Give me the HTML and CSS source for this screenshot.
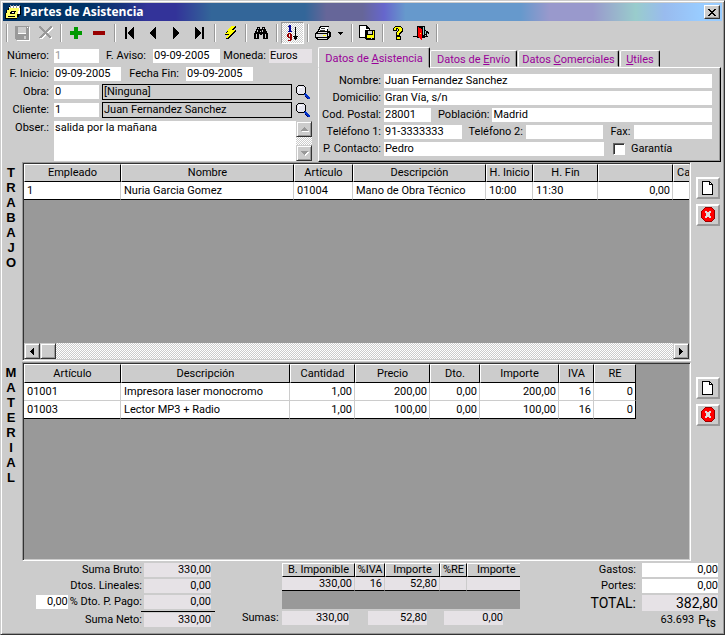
FILE: index.html
```
<!DOCTYPE html>
<html lang="es">
    <head>
        <meta charset="utf-8">
        <title>Partes de Asistencia</title>
        <link rel="stylesheet" href="styles.css">
    </head>
    <body>
        <div class="window">
            <!-- Title bar -->
            <div class="titlebar">
                <svg class="icon" viewBox="0 0 16 16">
                    <path d="M4 2h12v9h-2v2h-2v2H0V9h1V6h2V4h1z" fill="#000"/>
                    <path d="M5 2h10v8h-2V4H4z" fill="#fff"/>
                    <path d="M4 4h10v3h-1v3h-1v4H1V9h1V6h2z" fill="#ffff66"/>
                    <path d="M5 1h1v3H5zM8 1h1v3H8zM11 1h1v3h-1zM14 1h1v3h-1z" fill="#999"/>
                    <path d="M6 7h5v1h-1v2H5V8h1zM3 12h7v1H3z" fill="#000"/>
                    <path d="M7 8h2v1H7z" fill="#fff"/>
                </svg>
                <h1>Partes de Asistencia</h1>
                <button class="close" aria-label="Cerrar">
                    <svg viewBox="0 0 8 7"><path d="M0 0h2v1h1v1h2V1h1V0h2v1H7v1H6v1H5v1h1v1h1v1h1v1H6V6H5V5H3v1H2v1H0V6h1V5h1V4h1V3H2V2H1V1H0z"/></svg>
                </button>
            </div>

            <!-- Toolbar -->
            <div class="toolbar">
                <span class="sep"></span>
                <button aria-label="Guardar"><svg class="icon" viewBox="0 0 16 16">
                    <path d="M2 2h14v14H3v-1H2z" fill="#fff"/><path d="M1 1h14v14H2v-1H1z" fill="#999"/><path d="M4 2h8v6H4zM10 11h2v3h-2z" fill="#ccc"/><path d="M13 2h1v1h-1zM4 8h8v1H4z" fill="#fff"/>
                </svg></button>
                <button aria-label="Cancelar"><svg class="icon" viewBox="0 0 16 16">
                    <path d="M3 2l2 0 10 11 0 1-2 0L3 4zM15 2h1v1L5 14H3v-1z" fill="#fff"/><path d="M2 1h2l10 11v1h-2L2 3zM14 1h1v1L4 13H2v-1z" fill="#999"/>
                </svg></button>
                <span class="sep"></span>
                <button aria-label="Añadir"><svg class="icon" viewBox="0 0 16 16"><path d="M6 2h4v4h4v4h-4v4H6v-4H2V6h4z" fill="#090"/></svg></button>
                <button aria-label="Quitar"><svg class="icon" viewBox="0 0 16 16"><path d="M2 6h12v4H2z" fill="#900"/></svg></button>
                <span class="sep"></span>
                <button aria-label="Primero"><svg class="icon" viewBox="0 0 16 16"><path d="M3 2h2v12H3zM12 2v12h-1v-1h-1v-1H9v-1H8v-1H7V9H6V7h1V6h1V5h1V4h1V3h1V2z"/></svg></button>
                <button aria-label="Anterior"><svg class="icon" viewBox="0 0 16 16"><path d="M11 2v12h-1v-1H9v-1H8v-1H7v-1H6V9H5V7h1V6h1V5h1V4h1V3h1V2z"/></svg></button>
                <button aria-label="Siguiente"><svg class="icon" viewBox="0 0 16 16"><path d="M5 2v12h1v-1h1v-1h1v-1h1v-1h1V9h1V7h-1V6H9V5H8V4H7V3H6V2z"/></svg></button>
                <button aria-label="Último"><svg class="icon" viewBox="0 0 16 16"><path d="M11 2h2v12h-2zM4 2v12h1v-1h1v-1h1v-1h1v-1h1V9h1V7H9V6H8V5H7V4H6V3H5V2z"/></svg></button>
                <span class="sep"></span>
                <button aria-label="Ejecutar"><svg class="icon" viewBox="0 0 16 16">
                    <path d="M9 1h5v2h-1v1h-1v1h2v2h-1v1h-1v1h-1v1h-1v1H9v1H8v1H7v1H4v-2h1v-1h1v-1H3V8h1V7h1V5h1V4h1V3h1V2h1z"/>
                    <path d="M9 1h4v1h-1v1h-1v1h-1v1h3v1h-1v1h-1v1h-1v1H9v1H8v1H7v1H6v1H4v-1h1v-1h1v-1h1V9H3V8h2V7h1V6H5V5h1V4h1V3h1V2h1z" fill="#ff0"/>
                </svg></button>
                <span class="sep"></span>
                <button aria-label="Buscar"><svg class="icon" viewBox="0 0 16 16">
                    <path d="M4 2h3v2h2V2h3v2h1v2h1v2h1v6h-5V9H9v1H7V9H6v5H1V8h1V6h1V4h1z"/><path d="M5 3h1v1H5zM10 3h1v1h-1zM4 5h1v2H4zM9 5h1v2H9zM3 9h1v4H3zM12 9h1v4h-1zM7 6h1v1H7z" fill="#ccc"/>
                </svg></button>
                <span class="sep"></span>
                <button class="pressed" aria-label="Ordenar"><svg class="icon" viewBox="0 0 16 16">
                    <path d="M5 0h2v6h1v1H4V6h1V2H4V1h1z" fill="#009"/>
                    <path d="M4 8h3v1h1v6H7v1H4v-1h2v-2H4v-1H3V9h1zM5 9v3h1V9z" fill="#900"/>
                    <path d="M11 2h1v9h2v1h-1v2h-1v1h-1v-1h-1v-2H9v-1h2z"/>
                </svg></button>
                <span class="sep"></span>
                <button aria-label="Imprimir"><svg class="icon" viewBox="0 0 16 16">
                    <path d="M5 1h9v1h-1v4h2v1h1v5h-1v1h-1v1h-1v1H2v-1H1v-1H0V8h1V7h1V6h1V4h1V2h1z"/>
                    <path d="M6 2h7l-1 4H4z" fill="#fff"/><path d="M3 7h9v1H2zM1 9h11v3H1zM3 13h9v1H3zM13 8h1v3h-1z" fill="#ddd"/><path d="M6 3h4v1H6zM5 5h5v1H5z" fill="#333"/><path d="M8 10h3v1H8z" fill="#ff0"/>
                </svg></button>
                <button class="drop" aria-label="Opciones de impresión"><svg viewBox="0 0 5 3"><path d="M0 0h5v1H4v1H3v1H2V2H1V1H0z"/></svg></button>
                <span class="sep"></span>
                <button aria-label="Guardar como"><svg class="icon" viewBox="0 0 16 16">
                    <path d="M0 0h8v1h1v1h1v1h1v10H0z"/><path d="M1 1h6v3h3v8H1z" fill="#fff"/>
                    <path d="M6 5h10v10H7v-1H6z"/><path d="M7 6h1v7h7V6h-1v4H8V6z" fill="#ff0"/><path d="M9 6h4v3H9zM12 12h1v2h-1z" fill="#ccc"/>
                </svg></button>
                <span class="sep"></span>
                <button aria-label="Ayuda"><svg class="icon" viewBox="0 0 16 16">
                    <path d="M5 1h6v1h1v1h1v4h-1v1h-1v1h-1v2H6V7h1V6h1V4H7v2H3V3h1V2h1zM6 11h5v4H6z"/>
                    <path d="M5 2h6v1h1v3h-1v1h-1v1H9v2H7V7h1V6h1V4H8V3H6v2H4V3h1zM7 12h3v2H7z" fill="#ff0"/>
                </svg></button>
                <button aria-label="Salir"><svg class="icon" viewBox="0 0 16 16">
                    <path d="M4 1h8v12H4z"/><path d="M5 2l4 2v11l-4-3z" fill="#f00"/><path d="M0 11h5v1H0zM11 11h4v1h-4z"/><path d="M10 4h3v2h2v1h1v2h-2v3h-1v-2h-1v2h-2z" fill="#000"/><path d="M10 2h1v8h-1zM12 4h1v1h-1zM12 6h1v3h-1zM14 8h1v1h-1z" fill="#9cc"/><path d="M7 8h1v1H7z" fill="#ff0"/>
                </svg></button>
                <span class="sep"></span>
            </div>

            <!-- Header data -->
            <div class="header">
                <form class="parte">
                    <div class="row">
                        <label class="first" for="numero">Número:</label>
                        <input class="short" id="numero" value="1" disabled>
                        <label class="mid" for="aviso">F. Aviso:</label>
                        <input class="date" id="aviso" value="09-09-2005">
                        <label class="moneda" for="moneda">Moneda:</label>
                        <input class="grow soft" id="moneda" value="Euros" readonly>
                    </div>
                    <div class="row">
                        <label class="first" for="inicio">F. Inicio:</label>
                        <input class="date" id="inicio" value="09-09-2005">
                        <label class="fin" for="fin">Fecha Fin:</label>
                        <input class="date" id="fin" value="09-09-2005">
                    </div>
                    <div class="row">
                        <label class="first" for="obra">Obra:</label>
                        <input class="short" id="obra" value="0">
                        <output class="name">[Ninguna]</output>
                        <button type="button" class="lens" aria-label="Buscar obra"><svg class="icon" viewBox="0 0 16 16">
                            <circle cx="6" cy="6" r="5" fill="#e6e6f0" stroke="#000"/><path d="M4 3h3v1H4zM3 4h1v3H3z" fill="#fff"/><path d="M10 10l5 5" stroke="#0033cc" stroke-width="2"/><path d="M10 12l3 3" stroke="#000066"/>
                        </svg></button>
                    </div>
                    <div class="row">
                        <label class="first" for="cliente">Cliente:</label>
                        <input class="short" id="cliente" value="1">
                        <output class="name">Juan Fernandez Sanchez</output>
                        <button type="button" class="lens" aria-label="Buscar cliente"><svg class="icon" viewBox="0 0 16 16">
                            <circle cx="6" cy="6" r="5" fill="#e6e6f0" stroke="#000"/><path d="M4 3h3v1H4zM3 4h1v3H3z" fill="#fff"/><path d="M10 10l5 5" stroke="#0033cc" stroke-width="2"/><path d="M10 12l3 3" stroke="#000066"/>
                        </svg></button>
                    </div>
                    <div class="row notes">
                        <label class="first" for="obser">Obser.:</label>
                        <textarea id="obser">salida por la mañana</textarea>
                        <div class="vscroll">
                            <button type="button" class="scroll" aria-label="Subir"><svg viewBox="0 0 8 4"><path d="M5 1l4 4H1z" fill="#fff"/><path d="M4 0l4 4H0z" fill="#999"/></svg></button>
                            <button type="button" class="scroll" aria-label="Bajar"><svg viewBox="0 0 8 4"><path d="M5 5l4-4H1z" fill="#fff"/><path d="M4 4l4-4H0z" fill="#999"/></svg></button>
                        </div>
                    </div>
                </form>

                <div class="datos">
                    <div class="tabs">
                        <button class="tab active">Datos de <u>A</u>sistencia</button>
                        <button class="tab envio">Datos de <u>E</u>nvío</button>
                        <button class="tab comerciales">Datos <u>C</u>omerciales</button>
                        <button class="tab utiles"><u>U</u>tiles</button>
                    </div>
                    <form class="panel">
                        <div class="row">
                            <label class="first" for="nombre">Nombre:</label>
                            <input class="grow" id="nombre" value="Juan Fernandez Sanchez">
                        </div>
                        <div class="row">
                            <label class="first" for="domicilio">Domicilio:</label>
                            <input class="grow" id="domicilio" value="Gran Vía, s/n">
                        </div>
                        <div class="row">
                            <label class="first" for="postal">Cod. Postal:</label>
                            <input class="postal" id="postal" value="28001">
                            <label class="second" for="poblacion">Población:</label>
                            <input class="grow" id="poblacion" value="Madrid">
                        </div>
                        <div class="row">
                            <label class="first" for="tel1">Teléfono 1:</label>
                            <input class="grow" id="tel1" value="91-3333333">
                            <label class="second" for="tel2">Teléfono 2:</label>
                            <input class="grow" id="tel2">
                            <label class="fax" for="fax">Fax:</label>
                            <input class="grow" id="fax">
                        </div>
                        <div class="row">
                            <label class="first" for="contacto">P. Contacto:</label>
                            <input class="grow" id="contacto" value="Pedro">
                            <div class="check">
                                <input type="checkbox" id="garantia">
                                <label for="garantia">Garantía</label>
                            </div>
                        </div>
                    </form>
                </div>
            </div>

            <!-- Work grid -->
            <div class="section">
                <div class="side">T<br>R<br>A<br>B<br>A<br>J<br>O</div>
                <div class="grid">
                    <div class="view">
                        <table class="trabajo">
                            <colgroup><col class="w97"><col class="w173"><col class="w59"><col class="w133"><col class="w47"><col class="w65"><col class="w75"><col class="w65"></colgroup>
                            <thead>
                                <tr><th>Empleado</th><th>Nombre</th><th>Artículo</th><th>Descripción</th><th>H. Inicio</th><th>H. Fin</th><th></th><th class="left">Cantidad</th></tr>
                            </thead>
                            <tbody>
                                <tr><td>1</td><td>Nuria Garcia Gomez</td><td>01004</td><td>Mano de Obra Técnico</td><td>10:00</td><td>11:30</td><td class="num">0,00</td><td></td></tr>
                            </tbody>
                        </table>
                    </div>
                    <div class="hscroll">
                        <button class="scroll" aria-label="Izquierda"><svg viewBox="0 0 4 7"><path d="M4 0v7H3V6H2V5H1V4H0V3h1V2h1V1h1V0z"/></svg></button>
                        <span class="scroll thumb"></span>
                        <button class="scroll last" aria-label="Derecha"><svg viewBox="0 0 4 7"><path d="M0 0v7h1V6h1V5h1V4h1V3H3V2H2V1H1V0z"/></svg></button>
                    </div>
                </div>
                <div class="actions">
                    <button aria-label="Nuevo trabajo"><svg class="icon" viewBox="0 0 16 16"><path d="M2 1h8v1h1v1h1v1h1v11H2z"/><path d="M3 2h6v3h3v9H3z" fill="#fff"/><path d="M10 3h1v1h-1z" fill="#fff"/></svg></button>
                    <button aria-label="Borrar trabajo"><svg class="icon" viewBox="0 0 16 16"><path d="M5 0h6l4 4v7l-4 4H5l-4-4V4z" fill="#900"/><path d="M5 1h6l3 3v7l-3 3H5l-3-3V4z" fill="#f00"/><path d="M5 4h2v1h2V4h2v2h-1v3h1v2H9v-1H7v1H5V9h1V6H5z" fill="#ddd"/></svg></button>
                </div>
            </div>

            <!-- Material grid -->
            <div class="section">
                <div class="side">M<br>A<br>T<br>E<br>R<br>I<br>A<br>L</div>
                <div class="grid">
                    <div class="view">
                        <table class="material">
                            <colgroup><col class="w97"><col class="w169"><col class="w65"><col class="w75"><col class="w50"><col class="w79"><col class="w35"><col class="w42"></colgroup>
                            <thead>
                                <tr><th>Artículo</th><th>Descripción</th><th>Cantidad</th><th>Precio</th><th>Dto.</th><th>Importe</th><th>IVA</th><th>RE</th></tr>
                            </thead>
                            <tbody>
                                <tr><td>01001</td><td>Impresora laser monocromo</td><td class="num">1,00</td><td class="num">200,00</td><td class="num">0,00</td><td class="num">200,00</td><td class="num">16</td><td class="num">0</td></tr>
                                <tr><td>01003</td><td>Lector MP3 + Radio</td><td class="num">1,00</td><td class="num">100,00</td><td class="num">0,00</td><td class="num">100,00</td><td class="num">16</td><td class="num">0</td></tr>
                            </tbody>
                        </table>
                    </div>
                </div>
                <div class="actions">
                    <button aria-label="Nuevo material"><svg class="icon" viewBox="0 0 16 16"><path d="M2 1h8v1h1v1h1v1h1v11H2z"/><path d="M3 2h6v3h3v9H3z" fill="#fff"/><path d="M10 3h1v1h-1z" fill="#fff"/></svg></button>
                    <button aria-label="Borrar material"><svg class="icon" viewBox="0 0 16 16"><path d="M5 0h6l4 4v7l-4 4H5l-4-4V4z" fill="#900"/><path d="M5 1h6l3 3v7l-3 3H5l-3-3V4z" fill="#f00"/><path d="M5 4h2v1h2V4h2v2h-1v3h1v2H9v-1H7v1H5V9h1V6H5z" fill="#ddd"/></svg></button>
                </div>
            </div>

            <!-- Totals -->
            <div class="footer">
                <div class="bruto">
                    <div class="sum"><span>Suma Bruto:</span><output>330,00</output></div>
                    <div class="sum"><span>Dtos. Lineales:</span><output>0,00</output></div>
                    <div class="sum"><input class="dto" id="dto" value="0,00"><label for="dto">% Dto. P. Pago:</label><output>0,00</output></div>
                    <div class="line"></div>
                    <div class="sum"><span>Suma Neto:</span><output>330,00</output></div>
                </div>
                <div class="impuestos">
                    <div class="taxgrid">
                        <table class="tax">
                            <colgroup><col class="w73"><col class="w30"><col class="w55"><col class="w27"><col class="w65"></colgroup>
                            <thead>
                                <tr><th>B. Imponible</th><th>%IVA</th><th>Importe</th><th>%RE</th><th class="left">Importe</th></tr>
                            </thead>
                            <tbody>
                                <tr><td class="num">330,00</td><td class="num">16</td><td class="num">52,80</td><td></td><td></td></tr>
                            </tbody>
                        </table>
                    </div>
                    <div class="sumas"><span>Sumas:</span><output>330,00</output><output>52,80</output><output>0,00</output></div>
                </div>
                <div class="total">
                    <div class="sum"><label for="gastos">Gastos:</label><input id="gastos" value="0,00"></div>
                    <div class="sum"><label for="portes">Portes:</label><input id="portes" value="0,00"></div>
                    <div class="sum big"><span>TOTAL:</span><output>382,80</output></div>
                    <div class="pts">63.693 <span class="coin"><span>P</span><span class="ts">ts</span></span></div>
                </div>
            </div>
        </div>
    </body>
</html>
```
FILE: styles.css
```
* {
    box-sizing: border-box;
}
body {
    margin: 0;
    background-color: #ccc;
    font-family: Roboto, "Liberation Sans", sans-serif;
    font-size: 11px;
    line-height: 14px;
    color: #000;
}
button, input, textarea {
    margin: 0;
    padding: 0;
    border: 0;
    border-radius: 0;
    background: none;
    font: inherit;
    color: inherit;
}
input, output {
    display: block;
    height: 14px;
    min-width: 0;
    padding: 0 1px;
    background-color: #fff;
}
label {
    white-space: nowrap;
}
svg {
    display: block;
    shape-rendering: crispEdges;
    overflow: visible;
}
.icon {
    width: 16px;
    height: 16px;
}
.window {
    display: flex;
    flex-direction: column;
    height: 100vh;
    min-height: 500px;
    padding: 2px;
    border: 1px solid;
    border-color: #ccc #333 #333 #ccc;
    box-shadow: inset 1px 1px #fff, inset -1px -1px #999;
}

/* Title bar */
.titlebar {
    display: flex;
    align-items: center;
    height: 18px;
    padding: 0 2px;
    background: linear-gradient(to right, #003366 0%, #003366 12%, #1a3380 17%, #333399 20%, #333399 24%, #336699 29%, #336699 42%, #666699 45%, #666699 50%, #6666cc 53%, #6699cc 56%, #6699cc 72%, #9999cc 76%, #9999cc 82%, #99cccc 88%, #99bbee 92%, #99ccff 97%);
}
.titlebar h1 {
    flex: 1;
    margin: 0 0 0 2px;
    font-family: "Open Sans", sans-serif;
    font-size: 12px;
    font-weight: bold;
    color: #fff;
}
.close {
    display: flex;
    align-items: center;
    justify-content: center;
    width: 16px;
    height: 14px;
    background-color: #ccc;
    border: 1px solid;
    border-color: #fff #333 #333 #fff;
    box-shadow: inset -1px -1px #999;
}
.close svg {
    width: 8px;
    height: 7px;
}

/* Toolbar */
.toolbar {
    display: flex;
    align-items: center;
    height: 25px;
    padding-bottom: 1px;
}
.toolbar button {
    display: flex;
    align-items: center;
    width: 23px;
    height: 22px;
    padding-left: 3px;
}
.toolbar .pressed {
    padding-left: 2px;
    background: repeating-conic-gradient(#fff 0 25%, #ccc 0 50%) 0 0 / 2px 2px;
    border: 1px solid;
    border-color: #999 #fff #fff #999;
}
.toolbar .drop {
    width: 13px;
}
.drop svg {
    width: 5px;
    height: 3px;
}
.sep {
    width: 2px;
    height: 18px;
    margin: 0 3px;
    border-left: 1px solid #999;
    border-right: 1px solid #fff;
}

/* Header data */
.header {
    display: flex;
    gap: 6px;
    height: 116px;
    padding-right: 1px;
}
.row {
    display: flex;
    align-items: center;
}
.first {
    text-align: right;
}
.grow {
    flex: 1;
    width: 0;
}
.soft, output {
    background-color: #e6e2e6;
}
.parte {
    display: flex;
    flex-direction: column;
    gap: 4px;
    width: 309px;
    padding: 3px 0 1px;
}
.parte .row {
    height: 14px;
}
.parte .first {
    width: 46px;
    margin-right: 5px;
}
.short {
    width: 45px;
}
.short:disabled {
    color: #999;
}
.date {
    width: 67px;
}
.mid {
    width: 47px;
    margin-right: 7px;
    text-align: right;
}
.moneda {
    width: 46px;
    margin-right: 3px;
    text-align: right;
}
.fin {
    width: 58px;
    margin-right: 7px;
    text-align: right;
}
.name {
    flex: 1;
    height: 16px;
    margin: -1px 3px;
    padding: 0 1px;
    background-color: #ccc;
    border: 1px solid #000;
}
.lens {
    width: 17px;
    height: 16px;
}
.parte .notes {
    flex: 1;
    align-items: stretch;
}
textarea {
    flex: 1;
    min-width: 0;
    padding: 0 1px;
    background-color: #fff;
    resize: none;
    overflow: hidden;
}
.vscroll, .hscroll {
    display: flex;
    background: repeating-conic-gradient(#fff 0 25%, #ccc 0 50%) 0 0 / 2px 2px;
}
.vscroll {
    flex-direction: column;
    justify-content: space-between;
}
.scroll {
    display: flex;
    align-items: center;
    justify-content: center;
    width: 16px;
    height: 16px;
    background-color: #ccc;
    border: 1px solid;
    border-color: #ccc #333 #333 #ccc;
    box-shadow: inset 1px 1px #fff, inset -1px -1px #999;
}
.vscroll svg {
    width: 8px;
    height: 4px;
}
.hscroll svg {
    width: 4px;
    height: 7px;
}
.last {
    margin-left: auto;
}

/* Tabs */
.datos {
    display: flex;
    flex-direction: column;
    flex: 1;
    min-width: 0;
    padding-top: 1px;
}
.tabs {
    display: flex;
    align-items: flex-end;
    height: 20px;
}
.tab {
    height: 17px;
    margin-right: 1px;
    padding: 2px 0 0;
    border: 1px solid;
    border-color: #fff #000 transparent #fff;
    border-radius: 2px 2px 0 0;
    box-shadow: inset -1px 0 #999;
    color: #909;
    white-space: nowrap;
}
.active {
    width: 112px;
    height: 21px;
    margin-bottom: -1px;
    margin-right: 0;
    border-bottom-color: #ccc;
    background-color: #ccc;
    z-index: 1;
}
.envio {
    width: 87px;
}
.comerciales {
    width: 101px;
}
.utiles {
    width: 40px;
}
.panel {
    display: flex;
    flex-direction: column;
    gap: 3px;
    flex: 1;
    padding: 6px 8px 4px 0;
    border: 1px solid;
    border-color: #fff #000 #000 #fff;
    box-shadow: inset -1px -1px #999;
}
.panel .row {
    height: 14px;
}
.panel .first {
    width: 62px;
    margin-right: 3px;
}
.postal {
    width: 47px;
}
.second {
    margin: 0 3px 0 7px;
}
.fax {
    margin: 0 4px 0 7px;
}
.check {
    display: flex;
    align-items: center;
    width: 108px;
    padding-left: 9px;
}
.check input {
    appearance: none;
    width: 12px;
    height: 12px;
    margin-right: 6px;
    padding: 0;
    background-color: #fff;
    border: 1px solid;
    border-color: #666 #fff #fff #666;
    box-shadow: inset 1px 1px #333;
}
.check input:checked {
    background-color: #333;
}

/* Grids */
.section {
    display: flex;
    flex: 1 1 0;
    min-height: 0;
}
.side {
    width: 19px;
    padding: 3px 3px 0 0;
    font-family: "Liberation Sans", sans-serif;
    font-size: 13px;
    font-weight: bold;
    line-height: 15px;
    text-align: center;
}
.grid {
    display: flex;
    flex-direction: column;
    flex: 1;
    min-width: 0;
    margin-bottom: 1px;
    background-color: #999;
    border: 1px solid;
    border-color: #999 #fff #fff #999;
    box-shadow: inset 1px 1px #333, inset -1px -1px #ccc;
    padding: 1px;
}
.view {
    flex: 1;
    overflow: hidden;
}
table {
    width: 0;
    table-layout: fixed;
    border-collapse: separate;
    border-spacing: 0;
}
th {
    height: 18px;
    padding: 0;
    overflow: hidden;
    background-color: #ccc;
    border: 1px solid;
    border-color: #fff #000 #000 #fff;
    font-weight: normal;
    white-space: nowrap;
}
.material th {
    height: 19px;
}
.left {
    padding-left: 3px;
    text-align: left;
}
td {
    height: 18px;
    padding: 0 2px 0 3px;
    overflow: hidden;
    background-color: #fff;
    border: solid #ccc;
    border-width: 0 1px 1px 0;
    white-space: nowrap;
}
tr:last-child td {
    border-bottom-color: #000;
}
.material td:last-child {
    border-right-color: #000;
}
.num {
    text-align: right;
}
.w27 { width: 27px; }
.w30 { width: 30px; }
.w35 { width: 35px; }
.w42 { width: 42px; }
.w47 { width: 47px; }
.w50 { width: 50px; }
.w55 { width: 55px; }
.w59 { width: 59px; }
.w65 { width: 65px; }
.w73 { width: 73px; }
.w75 { width: 75px; }
.w79 { width: 79px; }
.w97 { width: 97px; }
.w133 { width: 133px; }
.w169 { width: 169px; }
.w173 { width: 173px; }
.actions {
    display: flex;
    flex-direction: column;
    gap: 5px;
    width: 31px;
    padding: 15px 2px 0 5px;
}
.actions button {
    display: flex;
    align-items: center;
    justify-content: center;
    width: 24px;
    height: 22px;
    border: 2px solid;
    border-color: #fff #999 #999 #fff;
}

/* Totals */
.footer {
    display: flex;
    height: 70px;
    padding: 1px 4px 0 28px;
}
.sum {
    display: flex;
    justify-content: flex-end;
    gap: 2px;
    margin-bottom: 2px;
    white-space: nowrap;
}
.sum input, .sum output, .sumas output {
    text-align: right;
    padding: 0;
}
.bruto {
    width: 184px;
}
.bruto .sum {
    padding-right: 4px;
}
.bruto output {
    width: 67px;
}
.bruto .dto {
    width: 32px;
}
.line {
    height: 1px;
    margin: 0 0 1px 110px;
    background-color: #000;
}
.impuestos {
    margin-left: 27px;
}
.taxgrid {
    width: 238px;
    height: 46px;
    margin-left: 40px;
    overflow: hidden;
    background-color: #999;
}
.tax th, .tax td {
    height: 14px;
    line-height: 12px;
}
.tax td {
    background-color: #e6e2e6;
}
.tax .left {
    padding-left: 9px;
}
.sumas {
    display: flex;
    margin-top: 2px;
}
.sumas span {
    width: 40px;
}
.sumas output {
    width: 59px;
    margin-right: 17px;
}
.sumas span + output {
    width: 67px;
    margin-right: 19px;
}
.total {
    width: 132px;
    margin-left: auto;
}
.total .sum {
    gap: 6px;
}
.total input, .total output {
    width: 76px;
}
.big {
    font-size: 14px;
    line-height: 16px;
}
.big output {
    height: 16px;
}
.pts {
    display: flex;
    justify-content: flex-end;
    gap: 4px;
    padding-right: 2px;
}
.coin {
    display: flex;
    font-size: 12px;
}
.ts {
    padding-top: 3px;
}
```
